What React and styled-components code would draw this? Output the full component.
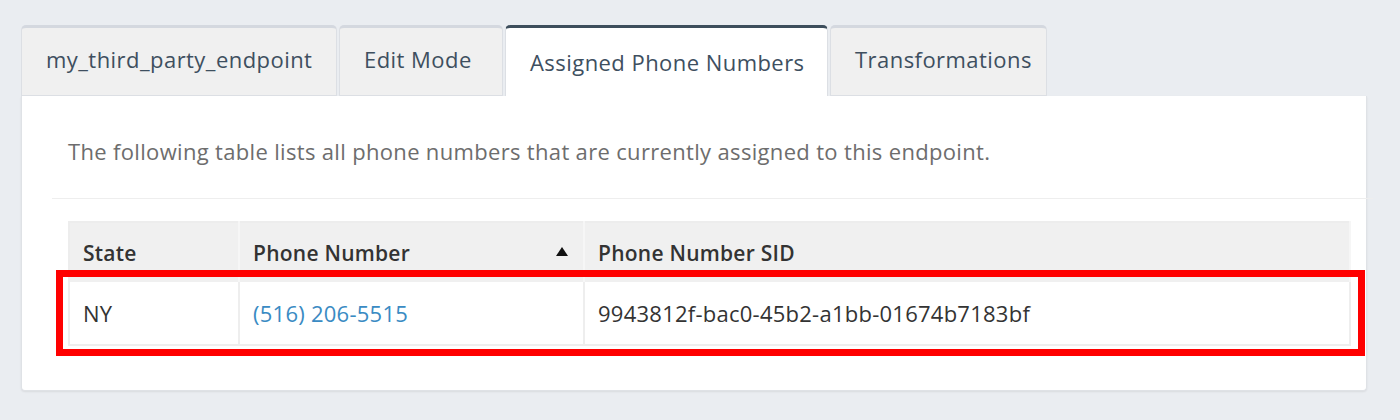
import React from "react";
import styled, { createGlobalStyle } from "styled-components";

const GlobalStyle = createGlobalStyle`
  body {
    margin: 0;
    background: #eaedf1;
    font-family: "Open Sans", Lato, "Liberation Sans", sans-serif;
  }
`;

const Page = styled.div`
  padding: 25px 33px 29px 21px;
`;

const TabBar = styled.div`
  display: flex;
  gap: 2px;
  height: 71px;
  align-items: stretch;
`;

const Tab = styled.div`
  box-sizing: border-box;
  display: flex;
  align-items: center;
  padding: 0 24px ${({ $active }) => ($active ? "0" : "5px")};
  width: ${({ $w }) => $w}px;
  font-size: 22px;
  letter-spacing: 0.45px;
  color: #3e4f5f;
  background: ${({ $active }) => ($active ? "#fff" : "#f0f0f0")};
  border-top: 3px solid ${({ $active }) => ($active ? "#3d4e5c" : "#d4d8df")};
  border-left: 1px solid #dcdfe4;
  border-right: 1px solid #dcdfe4;
  border-bottom: ${({ $active }) => ($active ? "none" : "1px solid #dcdfe4")};
  border-radius: 5px 5px 0 0;
  white-space: nowrap;
  position: relative;
  z-index: ${({ $active }) => ($active ? 1 : 0)};
`;

const Panel = styled.div`
  background: #fff;
  border: 1px solid #dfe2e6;
  border-top: none;
  border-radius: 0 0 4px 4px;
  box-shadow: 0 1px 2px rgba(0, 0, 0, 0.08);
  padding: 41px 15px 44px 30px;
`;

const Intro = styled.p`
  margin: 0 0 0 16px;
  font-size: 22px;
  letter-spacing: 0.33px;
  line-height: 28px;
  color: #6d6d6d;
`;

const Divider = styled.hr`
  border: none;
  border-top: 1px solid #eeeeee;
  margin: 33px -22px 22px 0;
`;

const TableWrap = styled.div`
  position: relative;
  margin-left: 16px;
`;

const Table = styled.table`
  width: 100%;
  border-collapse: collapse;
  border: 2px solid #ededed;
  font-size: 22px;
  letter-spacing: 0.25px;
  color: #333;
`;

const Th = styled.th`
  box-sizing: border-box;
  width: ${({ $w }) => ($w ? `${$w}px` : "auto")};
  height: 60px;
  padding: 0 15px 0 13px;
  text-align: left;
  font-size: 21px;
  font-weight: 600;
  background: #f0f0f0;
  border-right: 2px solid #f6f6f6;
`;

const HeadInner = styled.div`
  display: flex;
  align-items: center;
  justify-content: space-between;
`;

const SortArrow = styled.span`
  width: 0;
  height: 0;
  border-left: 6px solid transparent;
  border-right: 6px solid transparent;
  border-bottom: 9px solid #111;
  margin-top: -2px;
`;

const Td = styled.td`
  height: 62px;
  padding: 0 15px 0 13px;
  border: 2px solid #eeeeee;
  border-top: none;
`;

const PhoneLink = styled.a`
  color: #3a8bc3;
  text-decoration: none;
`;

const Highlight = styled.div`
  position: absolute;
  left: -12px;
  top: 49px;
  width: 1309px;
  height: 86px;
  box-sizing: border-box;
  border: 7px solid #ff0000;
  pointer-events: none;
`;

const tabs = [
  { label: "my_third_party_endpoint", w: 316 },
  { label: "Edit Mode", w: 164 },
  { label: "Assigned Phone Numbers", w: 323, active: true },
  { label: "Transformations", w: 217 },
];

export default function App() {
  return (
    <>
      <GlobalStyle />
      <Page>
        <TabBar>
          {tabs.map((t) => (
            <Tab key={t.label} $w={t.w} $active={t.active}>
              {t.label}
            </Tab>
          ))}
        </TabBar>
        <Panel>
          <Intro>
            The following table lists all phone numbers that are currently
            assigned to this endpoint.
          </Intro>
          <Divider />
          <TableWrap>
            <Table>
              <thead>
                <tr>
                  <Th $w={170}>State</Th>
                  <Th $w={345}>
                    <HeadInner>
                      Phone Number
                      <SortArrow />
                    </HeadInner>
                  </Th>
                  <Th>Phone Number SID</Th>
                </tr>
              </thead>
              <tbody>
                <tr>
                  <Td>NY</Td>
                  <Td>
                    <PhoneLink href="#">(516) 206-5515</PhoneLink>
                  </Td>
                  <Td>9943812f-bac0-45b2-a1bb-01674b7183bf</Td>
                </tr>
              </tbody>
            </Table>
            <Highlight />
          </TableWrap>
        </Panel>
      </Page>
    </>
  );
}
